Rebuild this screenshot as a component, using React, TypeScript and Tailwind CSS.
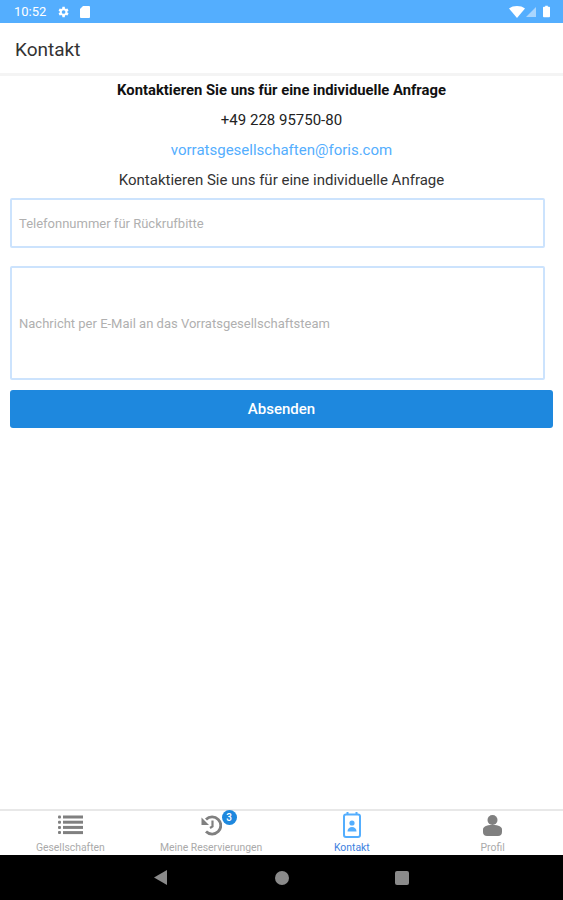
import type React from "react"

const HistoryIcon = (props: React.SVGProps<SVGSVGElement>) => (
  <svg viewBox="0 0 21 21" fill="none" stroke="currentColor" strokeWidth="2.8" {...props}>
    <path d="M5 4.500a8.600 8.600 0 1 1 0 12" />
    <path d="M0.500 2.500v7.500h7.500z" fill="currentColor" stroke="none" />
    <path d="M11.500 5.500v6l-2.500 1.500" strokeWidth="2.200" />
  </svg>
)

const ListIcon = (props: React.SVGProps<SVGSVGElement>) => (
  <svg viewBox="0 0 25 20" fill="currentColor" {...props}>
    <rect x="0" y="0.5" width="3" height="3" rx="1" />
    <rect x="5" y="0.5" width="20" height="3" />
    <rect x="0" y="5.7" width="3" height="3" rx="1" />
    <rect x="5" y="5.7" width="20" height="3" />
    <rect x="0" y="10.9" width="3" height="3" rx="1" />
    <rect x="5" y="10.9" width="20" height="3" />
    <rect x="0" y="16.1" width="3" height="3" rx="1" />
    <rect x="5" y="16.1" width="20" height="3" />
  </svg>
)

const ContactIcon = (props: React.SVGProps<SVGSVGElement>) => (
  <svg viewBox="0 0 18 26" fill="none" {...props}>
    <rect x="1" y="2.5" width="16" height="22.5" rx="2" stroke="currentColor" strokeWidth="2" />
    <rect x="3.5" y="0" width="2" height="3" fill="currentColor" />
    <rect x="12.5" y="0" width="2" height="3" fill="currentColor" />
    <circle cx="9" cy="11" r="2.6" fill="currentColor" />
    <path d="M4.5 19.5c0-3 2-4.5 4.5-4.5s4.5 1.500 4.500 4.500z" fill="currentColor" />
  </svg>
)

const ProfileIcon = (props: React.SVGProps<SVGSVGElement>) => (
  <svg viewBox="0 0 19 21" fill="currentColor" {...props}>
    <circle cx="9.500" cy="5" r="5" />
    <path d="M0 17v-2.500c0-2.500 3-4.500 9.500-4.500s9.500 2 9.500 4.500V17c0 2.500-1.500 4-4 4H4c-2.500 0-4-1.500-4-4z" />
  </svg>
)

const tabs = [
  { label: "Gesellschaften", icon: <ListIcon className="w-[25px] h-[20px] mt-[-3px]" /> },
  { label: "Meine Reservierungen", icon: <HistoryIcon className="w-[21px] h-[21px] mt-[-1px]" />, badge: "3" },
  { label: "Kontakt", icon: <ContactIcon className="w-[18px] h-[26px] mt-[-2px]" />, active: true },
  { label: "Profil", icon: <ProfileIcon className="w-[19px] h-[21px] mt-[-2px]" /> },
]

export default function App() {
  return (
    <div className="w-[563px] h-[900px] flex flex-col bg-white font-['Roboto',sans-serif] overflow-hidden">
      {/* Status bar */}
      <div className="h-[23px] shrink-0 bg-[#54aefe] flex items-center pl-[14px] pr-[13px] text-white">
        <span className="text-[13px] leading-none">10:52</span>
        <svg viewBox="0 0 24 24" fill="currentColor" className="w-[14px] h-[14px] ml-[10px]">
          <path d="M19.400 13a7.500 7.500 0 0 0 0-2l2.100-1.600-2-3.500-2.500 1a7.500 7.500 0 0 0-1.700-1L15 3.200h-4l-.4 2.700a7.500 7.500 0 0 0-1.700 1l-2.500-1-2 3.500L6.500 11a7.500 7.500 0 0 0 0 2l-2.100 1.600 2 3.500 2.500-1a7.500 7.500 0 0 0 1.700 1l.4 2.700h4l.4-2.700a7.500 7.500 0 0 0 1.700-1l2.500 1 2-3.500zM13 15.200a3.200 3.200 0 1 1 0-6.400 3.200 3.200 0 0 1 0 6.400z" />
        </svg>
        <svg viewBox="0 0 10 12" fill="currentColor" className="w-[10px] h-[12px] ml-[10px]">
          <path d="M3 0h6a1 1 0 0 1 1 1v10a1 1 0 0 1-1 1H1a1 1 0 0 1-1-1V3z" />
        </svg>
        <div className="ml-auto flex items-center">
          <svg viewBox="0 0 16 12" fill="currentColor" className="w-[16px] h-[12px]">
            <path d="M0 2.500C2 .8 5 0 8 0s6 .8 8 2.500L8 12z" />
          </svg>
          <svg viewBox="0 0 10 10" fill="currentColor" className="w-[10px] h-[10px] ml-[1px] opacity-50">
            <path d="M10 0v10H0z" />
          </svg>
          <svg viewBox="0 0 8 13" fill="currentColor" className="w-[7px] h-[13px] ml-[7px]">
            <path d="M2.500 0h3v1H7a1 1 0 0 1 1 1v10a1 1 0 0 1-1 1H1a1 1 0 0 1-1-1V2a1 1 0 0 1 1-1h1.500z" />
          </svg>
        </div>
      </div>

      {/* Header */}
      <div className="h-[53px] shrink-0 flex items-center pl-[15px] pt-[4px] text-[19px] text-[#333] border-b-[3px] border-[#f4f4f4]">
        Kontakt
      </div>

      {/* Content */}
      <div className="flex-1 flex flex-col">
        <div className="h-[30px] mt-[-1px] pt-[1px] flex items-center justify-center text-[14.8px] font-bold text-[#111]">
          Kontaktieren Sie uns für eine individuelle Anfrage
        </div>
        <div className="h-[30px] flex items-center justify-center text-[15px] text-[#222]">+49 228 95750-80</div>
        <div className="h-[30px] flex items-center justify-center text-[15px] text-[#54aefe]">
          vorratsgesellschaften@foris.com
        </div>
        <div className="h-[30px] flex items-center justify-center text-[15px] text-[#333]">
          Kontaktieren Sie uns für eine individuelle Anfrage
        </div>

        <div className="ml-[10px] w-[535px] h-[50px] mt-[3px] pt-[1px] border-2 border-[#cce3fd] rounded-[2px] flex items-center pl-[7px] text-[13px] text-[#b0b0b0]">
          Telefonnummer für Rückrufbitte
        </div>
        <div className="ml-[10px] w-[535px] h-[114px] mt-[18px] pt-[1px] border-2 border-[#cce3fd] rounded-[2px] flex items-center pl-[7px] text-[13px] text-[#b0b0b0]">
          Nachricht per E-Mail an das Vorratsgesellschaftsteam
        </div>
        <button className="ml-[10px] w-[543px] h-[38px] mt-[10px] pt-[1px] bg-[#1e88de] rounded-[3px] text-white text-[15px] font-medium">
          Absenden
        </button>
      </div>

      {/* Tab bar */}
      <div className="h-[46px] shrink-0 border-t-2 border-[#e8e8e8] grid grid-cols-4">
        {tabs.map((tab) => (
          <div
            key={tab.label}
            className={`flex flex-col items-center ${tab.active ? "text-[#54aefe]" : "text-[#808080]"}`}
          >
            <div className="relative h-[30px] flex items-center justify-center">
              {tab.icon}
              {tab.badge && (
                <span className="absolute left-[21px] top-[-1px] w-[15px] h-[15px] rounded-full bg-[#1e88de] text-white text-[10px] leading-[15px] text-center font-medium">
                  {tab.badge}
                </span>
              )}
            </div>
            <span className={`text-[10.4px] leading-[14px] ${tab.active ? "text-[#3d7fe0]" : "text-[#aaa]"}`}>
              {tab.label}
            </span>
          </div>
        ))}
      </div>

      {/* Android nav */}
      <div className="h-[45px] shrink-0 bg-black flex items-center justify-center">
        <svg viewBox="0 0 13 15" fill="#8a8a8a" className="w-[13px] h-[15px] mr-[108px]">
          <path d="M13 0v15L0 7.500z" />
        </svg>
        <div className="w-[14px] h-[14px] rounded-full bg-[#8a8a8a] mr-[106px]" />
        <div className="w-[14px] h-[14px] rounded-[2px] bg-[#8a8a8a]" />
      </div>
    </div>
  )
}
